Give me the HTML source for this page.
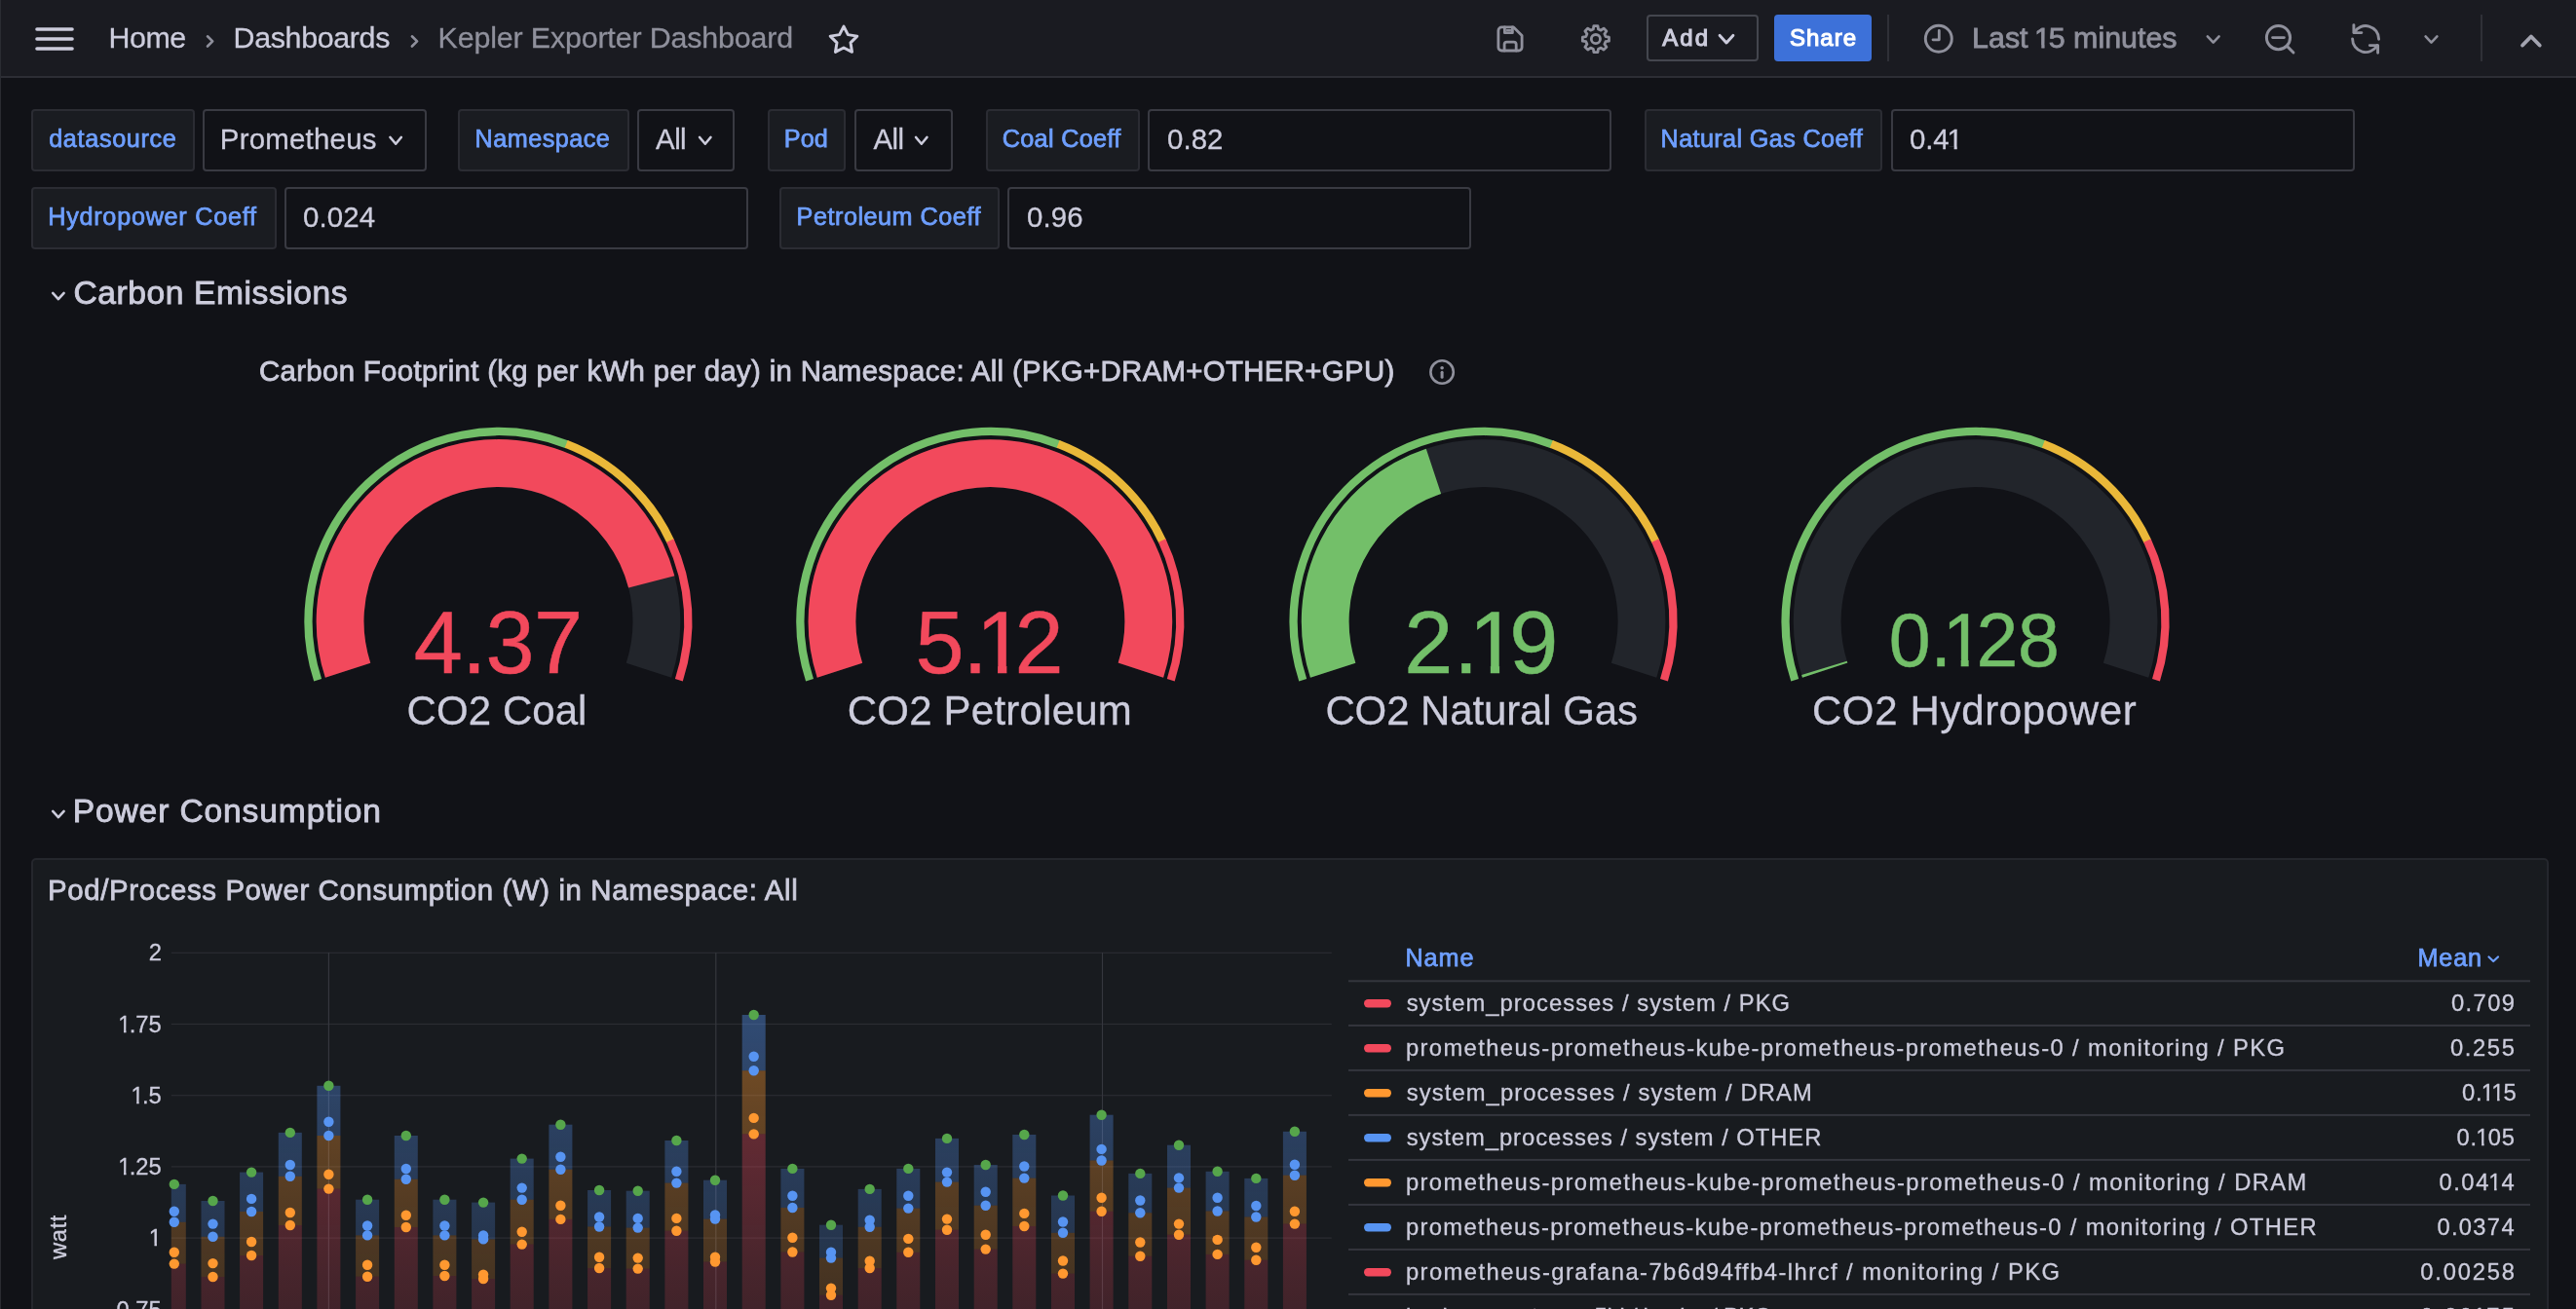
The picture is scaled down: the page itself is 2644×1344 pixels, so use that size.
<!DOCTYPE html>
<html><head><meta charset="utf-8"><title>Kepler Exporter Dashboard</title>
<style>
html,body{margin:0;padding:0;background:#111217;}
body{width:2644px;height:1344px;overflow:hidden;position:relative;font-family:"Liberation Sans",sans-serif;}
.t{position:absolute;white-space:nowrap;display:block;}
.b{position:absolute;box-sizing:content-box;}
svg{position:absolute;left:0;top:0;}
#root{position:absolute;left:0;top:0;width:2644px;height:1344px;overflow:hidden;will-change:transform;}
</style></head><body><div id="root">
<div class="b" style="left:0;top:0;width:2644px;height:78px;background:#1a1b21;border-bottom:2px solid #2d2e35"></div>
<span class="t" style="left:111.6px;top:21px;font-size:30.38px;line-height:34px;color:#ccccdc;letter-spacing:-0.522px;-webkit-text-stroke:0.3px #ccccdc;">Home</span>
<span class="t" style="left:239.6px;top:21px;font-size:30.38px;line-height:34px;color:#ccccdc;letter-spacing:-0.339px;-webkit-text-stroke:0.3px #ccccdc;">Dashboards</span>
<span class="t" style="left:449.6px;top:21px;font-size:30.38px;line-height:34px;color:#8f909c;letter-spacing:-0.152px;-webkit-text-stroke:0.3px #8f909c;">Kepler Exporter Dashboard</span>
<div class="b" style="left:1690px;top:15px;width:111px;height:44px;background:transparent;border:2px solid #44464e;border-radius:4px;"></div>
<span class="t" style="left:1706.3px;top:25px;font-size:24.0px;line-height:27px;color:#ccccdc;letter-spacing:2.020px;-webkit-text-stroke:1.1px #ccccdc;">Add</span>
<div class="b" style="left:1821px;top:15px;width:100px;height:48px;background:#3d71d9;border-radius:4px"></div>
<span class="t" style="left:1836.9px;top:25px;font-size:24.0px;line-height:27px;color:#ffffff;letter-spacing:1.050px;-webkit-text-stroke:1.1px #ffffff;">Share</span>
<div class="b" style="left:1937px;top:15px;width:2px;height:48px;background:#2f3037"></div>
<span class="t" style="left:2024.1px;top:21px;font-size:30.38px;line-height:34px;color:#8f909c;letter-spacing:0.019px;-webkit-text-stroke:0.8px #8f909c;">Last <span style="display:inline-block;margin:0 -0.07em 0 -0.07em;clip-path:polygon(0 0,0.36em 0,0.348em 25.1px,0.348em 30px,0.245em 30px,0.245em 25.1px,0 25.1px)">1</span>5 minutes</span>
<div class="b" style="left:2546px;top:15px;width:2px;height:48px;background:#2f3037"></div>
<div class="b" style="left:0;top:0;width:1px;height:1344px;background:#2a2c32"></div>
<div class="b" style="left:32px;top:112px;width:164px;height:60px;background:#1a1c21;border:2px solid #2b2c33;border-radius:4px;"></div>
<span class="t" style="left:50.2px;top:128px;font-size:25.2px;line-height:28px;color:#6e9fff;letter-spacing:0.670px;-webkit-text-stroke:0.75px #6e9fff;">datasource</span>
<div class="b" style="left:208px;top:112px;width:226px;height:60px;background:#111217;border:2px solid #393a42;border-radius:4px;"></div>
<span class="t" style="left:225.8px;top:126px;font-size:29.4px;line-height:33px;color:#ccccdc;letter-spacing:0.246px;-webkit-text-stroke:0.3px #ccccdc;">Prometheus</span>
<div class="b" style="left:470px;top:112px;width:172px;height:60px;background:#1a1c21;border:2px solid #2b2c33;border-radius:4px;"></div>
<span class="t" style="left:487.6px;top:128px;font-size:25.2px;line-height:28px;color:#6e9fff;letter-spacing:0.463px;-webkit-text-stroke:0.75px #6e9fff;">Namespace</span>
<div class="b" style="left:654px;top:112px;width:96px;height:60px;background:#111217;border:2px solid #393a42;border-radius:4px;"></div>
<span class="t" style="left:673.1px;top:126px;font-size:29.4px;line-height:33px;color:#ccccdc;letter-spacing:-0.561px;-webkit-text-stroke:0.3px #ccccdc;">All</span>
<div class="b" style="left:788px;top:112px;width:76px;height:60px;background:#1a1c21;border:2px solid #2b2c33;border-radius:4px;"></div>
<span class="t" style="left:804.7px;top:128px;font-size:25.2px;line-height:28px;color:#6e9fff;letter-spacing:0.149px;-webkit-text-stroke:0.75px #6e9fff;">Pod</span>
<div class="b" style="left:877px;top:112px;width:97px;height:60px;background:#111217;border:2px solid #393a42;border-radius:4px;"></div>
<span class="t" style="left:896.5px;top:126px;font-size:29.4px;line-height:33px;color:#ccccdc;letter-spacing:-0.561px;-webkit-text-stroke:0.3px #ccccdc;">All</span>
<div class="b" style="left:1012px;top:112px;width:154px;height:60px;background:#1a1c21;border:2px solid #2b2c33;border-radius:4px;"></div>
<span class="t" style="left:1028.7px;top:128px;font-size:25.2px;line-height:28px;color:#6e9fff;letter-spacing:0.341px;-webkit-text-stroke:0.75px #6e9fff;">Coal Coeff</span>
<div class="b" style="left:1178px;top:112px;width:472px;height:60px;background:#111217;border:2px solid #393a42;border-radius:4px;"></div>
<span class="t" style="left:1198.1px;top:126px;font-size:29.4px;line-height:33px;color:#ccccdc;letter-spacing:0.021px;-webkit-text-stroke:0.3px #ccccdc;">0.82</span>
<div class="b" style="left:1688px;top:112px;width:240px;height:60px;background:#1a1c21;border:2px solid #2b2c33;border-radius:4px;"></div>
<span class="t" style="left:1704.6px;top:128px;font-size:25.2px;line-height:28px;color:#6e9fff;letter-spacing:0.379px;-webkit-text-stroke:0.75px #6e9fff;">Natural Gas Coeff</span>
<div class="b" style="left:1941px;top:112px;width:472px;height:60px;background:#111217;border:2px solid #393a42;border-radius:4px;"></div>
<span class="t" style="left:1959.9px;top:126px;font-size:29.4px;line-height:33px;color:#ccccdc;letter-spacing:-0.075px;-webkit-text-stroke:0.3px #ccccdc;">0.4<span style="display:inline-block;margin:0 0em 0 -0.07em;clip-path:polygon(0 0,0.36em 0,0.348em 24.2px,0.348em 29px,0.245em 29px,0.245em 24.2px,0 24.2px)">1</span></span>
<div class="b" style="left:32px;top:192px;width:248px;height:60px;background:#1a1c21;border:2px solid #2b2c33;border-radius:4px;"></div>
<span class="t" style="left:49.2px;top:208px;font-size:25.2px;line-height:28px;color:#6e9fff;letter-spacing:0.752px;-webkit-text-stroke:0.75px #6e9fff;">Hydropower Coeff</span>
<div class="b" style="left:292px;top:192px;width:472px;height:60px;background:#111217;border:2px solid #393a42;border-radius:4px;"></div>
<span class="t" style="left:311.0px;top:206px;font-size:29.4px;line-height:33px;color:#ccccdc;letter-spacing:0.139px;-webkit-text-stroke:0.3px #ccccdc;">0.024</span>
<div class="b" style="left:800px;top:192px;width:222px;height:60px;background:#1a1c21;border:2px solid #2b2c33;border-radius:4px;"></div>
<span class="t" style="left:817.6px;top:208px;font-size:25.2px;line-height:28px;color:#6e9fff;letter-spacing:0.523px;-webkit-text-stroke:0.75px #6e9fff;">Petroleum Coeff</span>
<div class="b" style="left:1034px;top:192px;width:472px;height:60px;background:#111217;border:2px solid #393a42;border-radius:4px;"></div>
<span class="t" style="left:1053.9px;top:206px;font-size:29.4px;line-height:33px;color:#ccccdc;letter-spacing:0.156px;-webkit-text-stroke:0.3px #ccccdc;">0.96</span>
<span class="t" style="left:75.5px;top:282px;font-size:33.6px;line-height:37px;color:#ccccdc;letter-spacing:0.573px;-webkit-text-stroke:0.9px #ccccdc;">Carbon Emissions</span>
<span class="t" style="left:74.7px;top:814px;font-size:33.6px;line-height:37px;color:#ccccdc;letter-spacing:0.869px;-webkit-text-stroke:0.9px #ccccdc;">Power Consumption</span>
<span class="t" style="left:266.0px;top:364px;font-size:29.4px;line-height:33px;color:#ccccdc;letter-spacing:0.325px;-webkit-text-stroke:0.8px #ccccdc;">Carbon Footprint (kg per kWh per day) in Namespace: All (PKG+DRAM+OTHER+GPU)</span>
<span class="t" style="left:424.7px;top:610px;font-size:90px;line-height:100px;color:#f2495c;letter-spacing:-0.583px;-webkit-text-stroke:0.5px #f2495c;">4.37</span>
<span class="t" style="left:939.6px;top:610px;font-size:90px;line-height:100px;color:#f2495c;letter-spacing:-1.150px;-webkit-text-stroke:0.5px #f2495c;">5.<span style="display:inline-block;margin:0 -0.105em 0 -0.115em;clip-path:polygon(0 0,0.36em 0,0.348em 72.5px,0.348em 83px,0.245em 83px,0.245em 72.5px,0 72.5px)">1</span>2</span>
<span class="t" style="left:1441.2px;top:610px;font-size:90px;line-height:100px;color:#73bf69;letter-spacing:0.933px;-webkit-text-stroke:0.5px #73bf69;">2.<span style="display:inline-block;margin:0 -0.105em 0 -0.115em;clip-path:polygon(0 0,0.36em 0,0.348em 72.5px,0.348em 83px,0.245em 83px,0.245em 72.5px,0 72.5px)">1</span>9</span>
<span class="t" style="left:1938.8px;top:614px;font-size:77px;line-height:86px;color:#73bf69;letter-spacing:-0.175px;-webkit-text-stroke:0.45px #73bf69;">0.<span style="display:inline-block;margin:0 -0.105em 0 -0.115em;clip-path:polygon(0 0,0.36em 0,0.348em 62.7px,0.348em 72px,0.245em 72px,0.245em 62.7px,0 62.7px)">1</span>28</span>
<span class="t" style="left:417.6px;top:706px;font-size:42.0px;line-height:47px;color:#ccccdc;letter-spacing:0.064px;-webkit-text-stroke:0.3px #ccccdc;">CO2 Coal</span>
<span class="t" style="left:869.7px;top:706px;font-size:42.0px;line-height:47px;color:#ccccdc;letter-spacing:0.220px;-webkit-text-stroke:0.3px #ccccdc;">CO2 Petroleum</span>
<span class="t" style="left:1360.4px;top:706px;font-size:42.0px;line-height:47px;color:#ccccdc;letter-spacing:-0.112px;-webkit-text-stroke:0.3px #ccccdc;">CO2 Natural Gas</span>
<span class="t" style="left:1859.9px;top:706px;font-size:42.0px;line-height:47px;color:#ccccdc;letter-spacing:0.653px;-webkit-text-stroke:0.3px #ccccdc;">CO2 Hydropower</span>
<div class="b" style="left:32px;top:881px;width:2580px;height:500px;background:#181b1f;border:2px solid #25272d;border-radius:5px"></div>
<span class="t" style="left:49.1px;top:897px;font-size:29.4px;line-height:33px;color:#ccccdc;letter-spacing:0.625px;-webkit-text-stroke:0.8px #ccccdc;">Pod/Process Power Consumption (W) in Namespace: All</span>
<span class="t" style="left:152.8px;top:964px;font-size:23.76px;line-height:27px;color:#ccccdc;-webkit-text-stroke:0.3px #ccccdc;">2</span>
<span class="t" style="left:121.2px;top:1038px;font-size:23.76px;line-height:27px;color:#ccccdc;-webkit-text-stroke:0.3px #ccccdc;"><span style="display:inline-block;margin:0 -0.07em 0 0em;clip-path:polygon(0 0,0.36em 0,0.348em 19.7px,0.348em 24px,0.245em 24px,0.245em 19.7px,0 19.7px)">1</span>.75</span>
<span class="t" style="left:134.4px;top:1111px;font-size:23.76px;line-height:27px;color:#ccccdc;-webkit-text-stroke:0.3px #ccccdc;"><span style="display:inline-block;margin:0 -0.07em 0 0em;clip-path:polygon(0 0,0.36em 0,0.348em 19.7px,0.348em 24px,0.245em 24px,0.245em 19.7px,0 19.7px)">1</span>.5</span>
<span class="t" style="left:121.2px;top:1184px;font-size:23.76px;line-height:27px;color:#ccccdc;-webkit-text-stroke:0.3px #ccccdc;"><span style="display:inline-block;margin:0 -0.07em 0 0em;clip-path:polygon(0 0,0.36em 0,0.348em 19.7px,0.348em 24px,0.245em 24px,0.245em 19.7px,0 19.7px)">1</span>.25</span>
<span class="t" style="left:152.7px;top:1257px;font-size:23.76px;line-height:27px;color:#ccccdc;-webkit-text-stroke:0.3px #ccccdc;"><span style="display:inline-block;margin:0 0em 0 0em;clip-path:polygon(0 0,0.36em 0,0.348em 19.7px,0.348em 24px,0.245em 24px,0.245em 19.7px,0 19.7px)">1</span></span>
<span class="t" style="left:119.5px;top:1331px;font-size:23.76px;line-height:27px;color:#ccccdc;-webkit-text-stroke:0.3px #ccccdc;">0.75</span>
<span class="t" style="left:0.0px;top:-22px;font-size:23.76px;line-height:27px;color:#ccccdc;letter-spacing:0.613px;-webkit-text-stroke:0.3px #ccccdc;transform:rotate(-90deg);transform-origin:0 0;left:46px;top:1293px;">watt</span>
<span class="t" style="left:1442.4px;top:969px;font-size:25.2px;line-height:28px;color:#6e9fff;letter-spacing:0.997px;-webkit-text-stroke:0.75px #6e9fff;">Name</span>
<span class="t" style="left:2481.4px;top:969px;font-size:25.2px;line-height:28px;color:#6e9fff;letter-spacing:0.885px;-webkit-text-stroke:0.75px #6e9fff;">Mean</span>
<span class="t" style="left:1443.7px;top:1016px;font-size:23.76px;line-height:27px;color:#ccccdc;letter-spacing:1.058px;-webkit-text-stroke:0.3px #ccccdc;">system_processes / system / PKG</span>
<span class="t" style="left:2515.9px;top:1016px;font-size:23.76px;line-height:27px;color:#ccccdc;letter-spacing:1.430px;-webkit-text-stroke:0.3px #ccccdc;">0.709</span>
<span class="t" style="left:1442.9px;top:1062px;font-size:23.76px;line-height:27px;color:#ccccdc;letter-spacing:1.405px;-webkit-text-stroke:0.3px #ccccdc;">prometheus-prometheus-kube-prometheus-prometheus-0 / monitoring / PKG</span>
<span class="t" style="left:2514.9px;top:1062px;font-size:23.76px;line-height:27px;color:#ccccdc;letter-spacing:1.650px;-webkit-text-stroke:0.3px #ccccdc;">0.255</span>
<span class="t" style="left:1443.7px;top:1108px;font-size:23.76px;line-height:27px;color:#ccccdc;letter-spacing:1.118px;-webkit-text-stroke:0.3px #ccccdc;">system_processes / system / DRAM</span>
<span class="t" style="left:2527.0px;top:1108px;font-size:23.76px;line-height:27px;color:#ccccdc;letter-spacing:0.734px;-webkit-text-stroke:0.3px #ccccdc;">0.<span style="display:inline-block;margin:0 -0.07em 0 -0.07em;clip-path:polygon(0 0,0.36em 0,0.348em 19.7px,0.348em 24px,0.245em 24px,0.245em 19.7px,0 19.7px)">1</span><span style="display:inline-block;margin:0 -0.07em 0 -0.07em;clip-path:polygon(0 0,0.36em 0,0.348em 19.7px,0.348em 24px,0.245em 24px,0.245em 19.7px,0 19.7px)">1</span>5</span>
<span class="t" style="left:1443.7px;top:1154px;font-size:23.76px;line-height:27px;color:#ccccdc;letter-spacing:0.969px;-webkit-text-stroke:0.3px #ccccdc;">system_processes / system / OTHER</span>
<span class="t" style="left:2521.5px;top:1154px;font-size:23.76px;line-height:27px;color:#ccccdc;letter-spacing:0.832px;-webkit-text-stroke:0.3px #ccccdc;">0.<span style="display:inline-block;margin:0 -0.07em 0 -0.07em;clip-path:polygon(0 0,0.36em 0,0.348em 19.7px,0.348em 24px,0.245em 24px,0.245em 19.7px,0 19.7px)">1</span>05</span>
<span class="t" style="left:1442.9px;top:1200px;font-size:23.76px;line-height:27px;color:#ccccdc;letter-spacing:1.422px;-webkit-text-stroke:0.3px #ccccdc;">prometheus-prometheus-kube-prometheus-prometheus-0 / monitoring / DRAM</span>
<span class="t" style="left:2503.4px;top:1200px;font-size:23.76px;line-height:27px;color:#ccccdc;letter-spacing:1.577px;-webkit-text-stroke:0.3px #ccccdc;">0.04<span style="display:inline-block;margin:0 -0.07em 0 -0.07em;clip-path:polygon(0 0,0.36em 0,0.348em 19.7px,0.348em 24px,0.245em 24px,0.245em 19.7px,0 19.7px)">1</span>4</span>
<span class="t" style="left:1442.9px;top:1246px;font-size:23.76px;line-height:27px;color:#ccccdc;letter-spacing:1.359px;-webkit-text-stroke:0.3px #ccccdc;">prometheus-prometheus-kube-prometheus-prometheus-0 / monitoring / OTHER</span>
<span class="t" style="left:2501.4px;top:1246px;font-size:23.76px;line-height:27px;color:#ccccdc;letter-spacing:1.312px;-webkit-text-stroke:0.3px #ccccdc;">0.0374</span>
<span class="t" style="left:1442.9px;top:1292px;font-size:23.76px;line-height:27px;color:#ccccdc;letter-spacing:1.461px;-webkit-text-stroke:0.3px #ccccdc;">prometheus-grafana-7b6d94ffb4-lhrcf / monitoring / PKG</span>
<span class="t" style="left:2484.3px;top:1292px;font-size:23.76px;line-height:27px;color:#ccccdc;letter-spacing:1.785px;-webkit-text-stroke:0.3px #ccccdc;">0.00258</span>
<span class="t" style="left:1442.9px;top:1338px;font-size:23.76px;line-height:27px;color:#ccccdc;letter-spacing:-0.240px;-webkit-text-stroke:0.3px #ccccdc;">kepler-exporter-wg5ld / kepler / PKG</span>
<span class="t" style="left:2484.3px;top:1338px;font-size:23.76px;line-height:27px;color:#ccccdc;letter-spacing:2.339px;-webkit-text-stroke:0.3px #ccccdc;">0.00<span style="display:inline-block;margin:0 -0.07em 0 -0.07em;clip-path:polygon(0 0,0.36em 0,0.348em 19.7px,0.348em 24px,0.245em 24px,0.245em 19.7px,0 19.7px)">1</span>75</span>
<svg width="2644" height="1344" viewBox="0 0 2644 1344"><defs><clipPath id="pc"><rect x="175.8" y="960" width="1191" height="400"/></clipPath><linearGradient id="gb" x1="0" y1="978" x2="0" y2="1564" gradientUnits="userSpaceOnUse"><stop offset="0" stop-color="#5794f2" stop-opacity="0.45"/><stop offset="1" stop-color="#5794f2" stop-opacity="0"/></linearGradient><linearGradient id="go" x1="0" y1="978" x2="0" y2="1564" gradientUnits="userSpaceOnUse"><stop offset="0" stop-color="#ff9830" stop-opacity="0.47"/><stop offset="1" stop-color="#ff9830" stop-opacity="0"/></linearGradient><linearGradient id="gr" x1="0" y1="978" x2="0" y2="1564" gradientUnits="userSpaceOnUse"><stop offset="0" stop-color="#f2495c" stop-opacity="0.5"/><stop offset="1" stop-color="#f2495c" stop-opacity="0"/></linearGradient></defs><rect x="175.8" y="977.70" width="1191.0" height="1.2" fill="#2b2d32"/><rect x="175.8" y="1050.90" width="1191.0" height="1.2" fill="#2b2d32"/><rect x="175.8" y="1124.10" width="1191.0" height="1.2" fill="#2b2d32"/><rect x="175.8" y="1197.30" width="1191.0" height="1.2" fill="#2b2d32"/><rect x="175.8" y="1270.50" width="1191.0" height="1.2" fill="#2b2d32"/><rect x="336.80" y="978" width="1.2" height="380" fill="#2b2d32"/><rect x="734.20" y="978" width="1.2" height="380" fill="#2b2d32"/><rect x="1130.90" y="978" width="1.2" height="380" fill="#2b2d32"/><g clip-path="url(#pc)"><rect x="166.8" y="1215.9" width="24" height="38.9" fill="url(#gb)"/><rect x="166.8" y="1254.8" width="24" height="42.8" fill="url(#go)"/><rect x="166.8" y="1297.6" width="24" height="52.4" fill="url(#gr)"/><rect x="206.5" y="1233.0" width="24" height="36.8" fill="url(#gb)"/><rect x="206.5" y="1269.8" width="24" height="41.2" fill="url(#go)"/><rect x="206.5" y="1311.0" width="24" height="39.0" fill="url(#gr)"/><rect x="246.1" y="1203.6" width="24" height="40.4" fill="url(#gb)"/><rect x="246.1" y="1244.0" width="24" height="45.0" fill="url(#go)"/><rect x="246.1" y="1289.0" width="24" height="61.0" fill="url(#gr)"/><rect x="285.8" y="1162.9" width="24" height="44.9" fill="url(#gb)"/><rect x="285.8" y="1207.8" width="24" height="50.2" fill="url(#go)"/><rect x="285.8" y="1258.0" width="24" height="92.0" fill="url(#gr)"/><rect x="325.4" y="1114.8" width="24" height="51.2" fill="url(#gb)"/><rect x="325.4" y="1166.0" width="24" height="54.6" fill="url(#go)"/><rect x="325.4" y="1220.6" width="24" height="129.4" fill="url(#gr)"/><rect x="365.1" y="1231.7" width="24" height="36.7" fill="url(#gb)"/><rect x="365.1" y="1268.4" width="24" height="42.3" fill="url(#go)"/><rect x="365.1" y="1310.7" width="24" height="39.3" fill="url(#gr)"/><rect x="404.8" y="1166.0" width="24" height="44.7" fill="url(#gb)"/><rect x="404.8" y="1210.7" width="24" height="49.3" fill="url(#go)"/><rect x="404.8" y="1260.0" width="24" height="90.0" fill="url(#gr)"/><rect x="444.4" y="1231.7" width="24" height="36.7" fill="url(#gb)"/><rect x="444.4" y="1268.4" width="24" height="41.6" fill="url(#go)"/><rect x="444.4" y="1310.0" width="24" height="40.0" fill="url(#gr)"/><rect x="484.1" y="1234.6" width="24" height="37.8" fill="url(#gb)"/><rect x="484.1" y="1272.4" width="24" height="40.6" fill="url(#go)"/><rect x="484.1" y="1313.0" width="24" height="37.0" fill="url(#gr)"/><rect x="523.7" y="1189.6" width="24" height="42.1" fill="url(#gb)"/><rect x="523.7" y="1231.7" width="24" height="45.9" fill="url(#go)"/><rect x="523.7" y="1277.6" width="24" height="72.4" fill="url(#gr)"/><rect x="563.4" y="1154.7" width="24" height="46.0" fill="url(#gb)"/><rect x="563.4" y="1200.7" width="24" height="51.2" fill="url(#go)"/><rect x="563.4" y="1251.9" width="24" height="98.1" fill="url(#gr)"/><rect x="603.1" y="1222.0" width="24" height="37.5" fill="url(#gb)"/><rect x="603.1" y="1259.5" width="24" height="42.5" fill="url(#go)"/><rect x="603.1" y="1302.0" width="24" height="48.0" fill="url(#gr)"/><rect x="642.7" y="1222.7" width="24" height="37.9" fill="url(#gb)"/><rect x="642.7" y="1260.6" width="24" height="42.0" fill="url(#go)"/><rect x="642.7" y="1302.6" width="24" height="47.4" fill="url(#gr)"/><rect x="682.4" y="1171.0" width="24" height="43.6" fill="url(#gb)"/><rect x="682.4" y="1214.6" width="24" height="49.1" fill="url(#go)"/><rect x="682.4" y="1263.7" width="24" height="86.3" fill="url(#gr)"/><rect x="722.0" y="1211.7" width="24" height="39.9" fill="url(#gb)"/><rect x="722.0" y="1251.6" width="24" height="43.9" fill="url(#go)"/><rect x="722.0" y="1295.5" width="24" height="54.5" fill="url(#gr)"/><rect x="761.7" y="1042.0" width="24" height="57.3" fill="url(#gb)"/><rect x="761.7" y="1099.3" width="24" height="65.1" fill="url(#go)"/><rect x="761.7" y="1164.4" width="24" height="185.6" fill="url(#gr)"/><rect x="801.4" y="1199.9" width="24" height="40.1" fill="url(#gb)"/><rect x="801.4" y="1240.0" width="24" height="45.5" fill="url(#go)"/><rect x="801.4" y="1285.5" width="24" height="64.5" fill="url(#gr)"/><rect x="841.0" y="1257.7" width="24" height="33.9" fill="url(#gb)"/><rect x="841.0" y="1291.6" width="24" height="38.1" fill="url(#go)"/><rect x="841.0" y="1329.7" width="24" height="20.3" fill="url(#gr)"/><rect x="880.7" y="1220.9" width="24" height="38.9" fill="url(#gb)"/><rect x="880.7" y="1259.8" width="24" height="42.2" fill="url(#go)"/><rect x="880.7" y="1302.0" width="24" height="48.0" fill="url(#gr)"/><rect x="920.3" y="1199.9" width="24" height="40.7" fill="url(#gb)"/><rect x="920.3" y="1240.6" width="24" height="45.2" fill="url(#go)"/><rect x="920.3" y="1285.8" width="24" height="64.2" fill="url(#gr)"/><rect x="960.0" y="1168.9" width="24" height="44.7" fill="url(#gb)"/><rect x="960.0" y="1213.6" width="24" height="49.1" fill="url(#go)"/><rect x="960.0" y="1262.7" width="24" height="87.3" fill="url(#gr)"/><rect x="999.7" y="1196.0" width="24" height="41.7" fill="url(#gb)"/><rect x="999.7" y="1237.7" width="24" height="44.9" fill="url(#go)"/><rect x="999.7" y="1282.6" width="24" height="67.4" fill="url(#gr)"/><rect x="1039.3" y="1165.0" width="24" height="44.6" fill="url(#gb)"/><rect x="1039.3" y="1209.6" width="24" height="49.4" fill="url(#go)"/><rect x="1039.3" y="1259.0" width="24" height="91.0" fill="url(#gr)"/><rect x="1079.0" y="1227.5" width="24" height="38.3" fill="url(#gb)"/><rect x="1079.0" y="1265.8" width="24" height="41.8" fill="url(#go)"/><rect x="1079.0" y="1307.6" width="24" height="42.4" fill="url(#gr)"/><rect x="1118.6" y="1144.7" width="24" height="46.8" fill="url(#gb)"/><rect x="1118.6" y="1191.5" width="24" height="52.3" fill="url(#go)"/><rect x="1118.6" y="1243.8" width="24" height="106.2" fill="url(#gr)"/><rect x="1158.3" y="1204.9" width="24" height="40.4" fill="url(#gb)"/><rect x="1158.3" y="1245.3" width="24" height="44.4" fill="url(#go)"/><rect x="1158.3" y="1289.7" width="24" height="60.3" fill="url(#gr)"/><rect x="1198.0" y="1175.7" width="24" height="43.9" fill="url(#gb)"/><rect x="1198.0" y="1219.6" width="24" height="48.1" fill="url(#go)"/><rect x="1198.0" y="1267.7" width="24" height="82.3" fill="url(#gr)"/><rect x="1237.6" y="1202.8" width="24" height="40.7" fill="url(#gb)"/><rect x="1237.6" y="1243.5" width="24" height="44.4" fill="url(#go)"/><rect x="1237.6" y="1287.9" width="24" height="62.1" fill="url(#gr)"/><rect x="1277.3" y="1209.9" width="24" height="39.6" fill="url(#gb)"/><rect x="1277.3" y="1249.5" width="24" height="44.2" fill="url(#go)"/><rect x="1277.3" y="1293.7" width="24" height="56.3" fill="url(#gr)"/><rect x="1316.9" y="1161.8" width="24" height="44.9" fill="url(#gb)"/><rect x="1316.9" y="1206.7" width="24" height="49.9" fill="url(#go)"/><rect x="1316.9" y="1256.6" width="24" height="93.4" fill="url(#gr)"/></g><rect x="336.80" y="978" width="1.2" height="380" fill="#ccccdc" opacity="0.07"/><rect x="734.20" y="978" width="1.2" height="380" fill="#ccccdc" opacity="0.07"/><rect x="1130.90" y="978" width="1.2" height="380" fill="#ccccdc" opacity="0.07"/><circle cx="178.8" cy="1297.6" r="5.2" fill="#ff9830"/><circle cx="178.8" cy="1285.8" r="5.2" fill="#ff9830"/><circle cx="178.8" cy="1254.8" r="5.2" fill="#5794f2"/><circle cx="178.8" cy="1243.8" r="5.2" fill="#5794f2"/><circle cx="178.8" cy="1215.9" r="5.2" fill="#56a64b"/><circle cx="218.5" cy="1311.0" r="5.2" fill="#ff9830"/><circle cx="218.5" cy="1297.1" r="5.2" fill="#ff9830"/><circle cx="218.5" cy="1269.8" r="5.2" fill="#5794f2"/><circle cx="218.5" cy="1256.6" r="5.2" fill="#5794f2"/><circle cx="218.5" cy="1233.0" r="5.2" fill="#56a64b"/><circle cx="258.1" cy="1289.0" r="5.2" fill="#ff9830"/><circle cx="258.1" cy="1275.0" r="5.2" fill="#ff9830"/><circle cx="258.1" cy="1244.0" r="5.2" fill="#5794f2"/><circle cx="258.1" cy="1230.9" r="5.2" fill="#5794f2"/><circle cx="258.1" cy="1203.6" r="5.2" fill="#56a64b"/><circle cx="297.8" cy="1258.0" r="5.2" fill="#ff9830"/><circle cx="297.8" cy="1245.0" r="5.2" fill="#ff9830"/><circle cx="297.8" cy="1207.8" r="5.2" fill="#5794f2"/><circle cx="297.8" cy="1196.0" r="5.2" fill="#5794f2"/><circle cx="297.8" cy="1162.9" r="5.2" fill="#56a64b"/><circle cx="337.4" cy="1220.6" r="5.2" fill="#ff9830"/><circle cx="337.4" cy="1205.7" r="5.2" fill="#ff9830"/><circle cx="337.4" cy="1166.0" r="5.2" fill="#5794f2"/><circle cx="337.4" cy="1151.8" r="5.2" fill="#5794f2"/><circle cx="337.4" cy="1114.8" r="5.2" fill="#56a64b"/><circle cx="377.1" cy="1310.7" r="5.2" fill="#ff9830"/><circle cx="377.1" cy="1298.7" r="5.2" fill="#ff9830"/><circle cx="377.1" cy="1268.4" r="5.2" fill="#5794f2"/><circle cx="377.1" cy="1258.5" r="5.2" fill="#5794f2"/><circle cx="377.1" cy="1231.7" r="5.2" fill="#56a64b"/><circle cx="416.8" cy="1260.0" r="5.2" fill="#ff9830"/><circle cx="416.8" cy="1247.7" r="5.2" fill="#ff9830"/><circle cx="416.8" cy="1210.7" r="5.2" fill="#5794f2"/><circle cx="416.8" cy="1200.0" r="5.2" fill="#5794f2"/><circle cx="416.8" cy="1166.0" r="5.2" fill="#56a64b"/><circle cx="456.4" cy="1310.0" r="5.2" fill="#ff9830"/><circle cx="456.4" cy="1298.7" r="5.2" fill="#ff9830"/><circle cx="456.4" cy="1268.4" r="5.2" fill="#5794f2"/><circle cx="456.4" cy="1258.5" r="5.2" fill="#5794f2"/><circle cx="456.4" cy="1231.7" r="5.2" fill="#56a64b"/><circle cx="496.1" cy="1313.0" r="5.2" fill="#ff9830"/><circle cx="496.1" cy="1308.6" r="5.2" fill="#ff9830"/><circle cx="496.1" cy="1272.4" r="5.2" fill="#5794f2"/><circle cx="496.1" cy="1268.4" r="5.2" fill="#5794f2"/><circle cx="496.1" cy="1234.6" r="5.2" fill="#56a64b"/><circle cx="535.7" cy="1277.6" r="5.2" fill="#ff9830"/><circle cx="535.7" cy="1264.8" r="5.2" fill="#ff9830"/><circle cx="535.7" cy="1231.7" r="5.2" fill="#5794f2"/><circle cx="535.7" cy="1219.6" r="5.2" fill="#5794f2"/><circle cx="535.7" cy="1189.6" r="5.2" fill="#56a64b"/><circle cx="575.4" cy="1251.9" r="5.2" fill="#ff9830"/><circle cx="575.4" cy="1237.7" r="5.2" fill="#ff9830"/><circle cx="575.4" cy="1200.7" r="5.2" fill="#5794f2"/><circle cx="575.4" cy="1187.8" r="5.2" fill="#5794f2"/><circle cx="575.4" cy="1154.7" r="5.2" fill="#56a64b"/><circle cx="615.1" cy="1302.0" r="5.2" fill="#ff9830"/><circle cx="615.1" cy="1290.8" r="5.2" fill="#ff9830"/><circle cx="615.1" cy="1259.5" r="5.2" fill="#5794f2"/><circle cx="615.1" cy="1249.5" r="5.2" fill="#5794f2"/><circle cx="615.1" cy="1222.0" r="5.2" fill="#56a64b"/><circle cx="654.7" cy="1302.6" r="5.2" fill="#ff9830"/><circle cx="654.7" cy="1291.6" r="5.2" fill="#ff9830"/><circle cx="654.7" cy="1260.6" r="5.2" fill="#5794f2"/><circle cx="654.7" cy="1250.9" r="5.2" fill="#5794f2"/><circle cx="654.7" cy="1222.7" r="5.2" fill="#56a64b"/><circle cx="694.4" cy="1263.7" r="5.2" fill="#ff9830"/><circle cx="694.4" cy="1250.9" r="5.2" fill="#ff9830"/><circle cx="694.4" cy="1214.6" r="5.2" fill="#5794f2"/><circle cx="694.4" cy="1202.8" r="5.2" fill="#5794f2"/><circle cx="694.4" cy="1171.0" r="5.2" fill="#56a64b"/><circle cx="734.0" cy="1295.5" r="5.2" fill="#ff9830"/><circle cx="734.0" cy="1290.8" r="5.2" fill="#ff9830"/><circle cx="734.0" cy="1251.6" r="5.2" fill="#5794f2"/><circle cx="734.0" cy="1247.4" r="5.2" fill="#5794f2"/><circle cx="734.0" cy="1211.7" r="5.2" fill="#56a64b"/><circle cx="773.7" cy="1164.4" r="5.2" fill="#ff9830"/><circle cx="773.7" cy="1147.9" r="5.2" fill="#ff9830"/><circle cx="773.7" cy="1099.3" r="5.2" fill="#5794f2"/><circle cx="773.7" cy="1084.8" r="5.2" fill="#5794f2"/><circle cx="773.7" cy="1042.0" r="5.2" fill="#56a64b"/><circle cx="813.4" cy="1285.5" r="5.2" fill="#ff9830"/><circle cx="813.4" cy="1270.8" r="5.2" fill="#ff9830"/><circle cx="813.4" cy="1240.0" r="5.2" fill="#5794f2"/><circle cx="813.4" cy="1227.7" r="5.2" fill="#5794f2"/><circle cx="813.4" cy="1199.9" r="5.2" fill="#56a64b"/><circle cx="853.0" cy="1329.7" r="5.2" fill="#ff9830"/><circle cx="853.0" cy="1322.6" r="5.2" fill="#ff9830"/><circle cx="853.0" cy="1291.6" r="5.2" fill="#5794f2"/><circle cx="853.0" cy="1285.8" r="5.2" fill="#5794f2"/><circle cx="853.0" cy="1257.7" r="5.2" fill="#56a64b"/><circle cx="892.7" cy="1302.0" r="5.2" fill="#ff9830"/><circle cx="892.7" cy="1294.7" r="5.2" fill="#ff9830"/><circle cx="892.7" cy="1259.8" r="5.2" fill="#5794f2"/><circle cx="892.7" cy="1252.7" r="5.2" fill="#5794f2"/><circle cx="892.7" cy="1220.9" r="5.2" fill="#56a64b"/><circle cx="932.3" cy="1285.8" r="5.2" fill="#ff9830"/><circle cx="932.3" cy="1271.9" r="5.2" fill="#ff9830"/><circle cx="932.3" cy="1240.6" r="5.2" fill="#5794f2"/><circle cx="932.3" cy="1227.7" r="5.2" fill="#5794f2"/><circle cx="932.3" cy="1199.9" r="5.2" fill="#56a64b"/><circle cx="972.0" cy="1262.7" r="5.2" fill="#ff9830"/><circle cx="972.0" cy="1251.6" r="5.2" fill="#ff9830"/><circle cx="972.0" cy="1213.6" r="5.2" fill="#5794f2"/><circle cx="972.0" cy="1203.6" r="5.2" fill="#5794f2"/><circle cx="972.0" cy="1168.9" r="5.2" fill="#56a64b"/><circle cx="1011.7" cy="1282.6" r="5.2" fill="#ff9830"/><circle cx="1011.7" cy="1267.7" r="5.2" fill="#ff9830"/><circle cx="1011.7" cy="1237.7" r="5.2" fill="#5794f2"/><circle cx="1011.7" cy="1223.8" r="5.2" fill="#5794f2"/><circle cx="1011.7" cy="1196.0" r="5.2" fill="#56a64b"/><circle cx="1051.3" cy="1259.0" r="5.2" fill="#ff9830"/><circle cx="1051.3" cy="1245.9" r="5.2" fill="#ff9830"/><circle cx="1051.3" cy="1209.6" r="5.2" fill="#5794f2"/><circle cx="1051.3" cy="1197.5" r="5.2" fill="#5794f2"/><circle cx="1051.3" cy="1165.0" r="5.2" fill="#56a64b"/><circle cx="1091.0" cy="1307.6" r="5.2" fill="#ff9830"/><circle cx="1091.0" cy="1294.5" r="5.2" fill="#ff9830"/><circle cx="1091.0" cy="1265.8" r="5.2" fill="#5794f2"/><circle cx="1091.0" cy="1254.5" r="5.2" fill="#5794f2"/><circle cx="1091.0" cy="1227.5" r="5.2" fill="#56a64b"/><circle cx="1130.6" cy="1243.8" r="5.2" fill="#ff9830"/><circle cx="1130.6" cy="1229.8" r="5.2" fill="#ff9830"/><circle cx="1130.6" cy="1191.5" r="5.2" fill="#5794f2"/><circle cx="1130.6" cy="1179.9" r="5.2" fill="#5794f2"/><circle cx="1130.6" cy="1144.7" r="5.2" fill="#56a64b"/><circle cx="1170.3" cy="1289.7" r="5.2" fill="#ff9830"/><circle cx="1170.3" cy="1275.5" r="5.2" fill="#ff9830"/><circle cx="1170.3" cy="1245.3" r="5.2" fill="#5794f2"/><circle cx="1170.3" cy="1232.5" r="5.2" fill="#5794f2"/><circle cx="1170.3" cy="1204.9" r="5.2" fill="#56a64b"/><circle cx="1210.0" cy="1267.7" r="5.2" fill="#ff9830"/><circle cx="1210.0" cy="1256.6" r="5.2" fill="#ff9830"/><circle cx="1210.0" cy="1219.6" r="5.2" fill="#5794f2"/><circle cx="1210.0" cy="1209.4" r="5.2" fill="#5794f2"/><circle cx="1210.0" cy="1175.7" r="5.2" fill="#56a64b"/><circle cx="1249.6" cy="1287.9" r="5.2" fill="#ff9830"/><circle cx="1249.6" cy="1272.9" r="5.2" fill="#ff9830"/><circle cx="1249.6" cy="1243.5" r="5.2" fill="#5794f2"/><circle cx="1249.6" cy="1229.8" r="5.2" fill="#5794f2"/><circle cx="1249.6" cy="1202.8" r="5.2" fill="#56a64b"/><circle cx="1289.3" cy="1293.7" r="5.2" fill="#ff9830"/><circle cx="1289.3" cy="1280.8" r="5.2" fill="#ff9830"/><circle cx="1289.3" cy="1249.5" r="5.2" fill="#5794f2"/><circle cx="1289.3" cy="1238.0" r="5.2" fill="#5794f2"/><circle cx="1289.3" cy="1209.9" r="5.2" fill="#56a64b"/><circle cx="1328.9" cy="1256.6" r="5.2" fill="#ff9830"/><circle cx="1328.9" cy="1243.8" r="5.2" fill="#ff9830"/><circle cx="1328.9" cy="1206.7" r="5.2" fill="#5794f2"/><circle cx="1328.9" cy="1195.7" r="5.2" fill="#5794f2"/><circle cx="1328.9" cy="1161.8" r="5.2" fill="#56a64b"/><path d="M2554.5 982.5 L2559.2 987 L2564 982.5" fill="none" stroke="#6e9fff" stroke-width="2.2" stroke-linecap="round" stroke-linejoin="round"/><rect x="1384" y="1006.3" width="1213" height="2" fill="#34363d"/><rect x="1400" y="1026.1" width="28" height="8.4" rx="4.2" fill="#f2495c"/><rect x="1384" y="1051.9" width="1213" height="2" fill="#34363d"/><rect x="1400" y="1072.1" width="28" height="8.4" rx="4.2" fill="#f2495c"/><rect x="1384" y="1097.9" width="1213" height="2" fill="#34363d"/><rect x="1400" y="1118.1" width="28" height="8.4" rx="4.2" fill="#ff9830"/><rect x="1384" y="1143.9" width="1213" height="2" fill="#34363d"/><rect x="1400" y="1164.1" width="28" height="8.4" rx="4.2" fill="#5794f2"/><rect x="1384" y="1189.9" width="1213" height="2" fill="#34363d"/><rect x="1400" y="1210.1" width="28" height="8.4" rx="4.2" fill="#ff9830"/><rect x="1384" y="1235.9" width="1213" height="2" fill="#34363d"/><rect x="1400" y="1256.1" width="28" height="8.4" rx="4.2" fill="#5794f2"/><rect x="1384" y="1281.9" width="1213" height="2" fill="#34363d"/><rect x="1400" y="1302.1" width="28" height="8.4" rx="4.2" fill="#f2495c"/><rect x="1384" y="1327.9" width="1213" height="2" fill="#34363d"/><rect x="1400" y="1348.1" width="28" height="8.4" rx="4.2" fill="#f2495c"/><rect x="1384" y="1373.9" width="1213" height="2" fill="#34363d"/><line x1="38" y1="30" x2="74" y2="30" stroke="#ccccdc" stroke-width="3.6" stroke-linecap="round"/><line x1="38" y1="40" x2="74" y2="40" stroke="#ccccdc" stroke-width="3.6" stroke-linecap="round"/><line x1="38" y1="50" x2="74" y2="50" stroke="#ccccdc" stroke-width="3.6" stroke-linecap="round"/><path d="M213.0 37.3 L218.2 42.4 L213.0 47.5" fill="none" stroke="#8f909c" stroke-width="2.6" stroke-linecap="round" stroke-linejoin="round"/><path d="M422.9 37.3 L428.1 42.4 L422.9 47.5" fill="none" stroke="#8f909c" stroke-width="2.6" stroke-linecap="round" stroke-linejoin="round"/><polygon points="866.00,27.10 870.35,35.61 879.79,37.12 873.04,43.89 874.52,53.33 866.00,49.00 857.48,53.33 858.96,43.89 852.21,37.12 861.65,35.61" fill="none" stroke="#ccccdc" stroke-width="3" stroke-linejoin="round"/><g fill="none" stroke="#8f909c" stroke-width="2.8" stroke-linejoin="round" stroke-linecap="round"><path d="M1541.4 27.9 H1553.6 L1562.1 36.4 V48.5 a3.5 3.5 0 0 1 -3.5 3.5 H1541.4 a3.5 3.5 0 0 1 -3.5 -3.5 V31.4 a3.5 3.5 0 0 1 3.5 -3.5 Z"/><path d="M1544.4 28 V33.7 H1552.4 V28"/><path d="M1546.6 30.9 H1550.4" stroke-width="2"/><path d="M1544.1 52 V45.6 a2.5 2.5 0 0 1 2.5 -2.5 H1553.7 a2.5 2.5 0 0 1 2.5 2.5 V52"/></g><path d="M1635.86 26.55 L1639.94 26.55 L1640.49 30.03 L1643.19 31.15 L1646.04 29.08 L1648.92 31.96 L1646.85 34.81 L1647.97 37.51 L1651.45 38.06 L1651.45 42.14 L1647.97 42.69 L1646.85 45.39 L1648.92 48.24 L1646.04 51.12 L1643.19 49.05 L1640.49 50.17 L1639.94 53.65 L1635.86 53.65 L1635.31 50.17 L1632.61 49.05 L1629.76 51.12 L1626.88 48.24 L1628.95 45.39 L1627.83 42.69 L1624.35 42.14 L1624.35 38.06 L1627.83 37.51 L1628.95 34.81 L1626.88 31.96 L1629.76 29.08 L1632.61 31.15 L1635.31 30.03 Z" fill="none" stroke="#8f909c" stroke-width="2.8" stroke-linejoin="round"/><circle cx="1637.9" cy="40.1" r="4.6" fill="none" stroke="#8f909c" stroke-width="2.8"/><path d="M1765.2 36.4 L1772.0 44.0 L1778.8 36.4" fill="none" stroke="#ccccdc" stroke-width="3" stroke-linecap="round" stroke-linejoin="round"/><circle cx="1989.8" cy="39.8" r="13.5" fill="none" stroke="#8f909c" stroke-width="2.9"/><path d="M1990.3 31.3 V40.8 H1984" fill="none" stroke="#8f909c" stroke-width="2.8" stroke-linecap="round" stroke-linejoin="round"/><path d="M2265.8 37.4 L2271.7 43.6 L2277.6 37.4" fill="none" stroke="#8f909c" stroke-width="2.6" stroke-linecap="round" stroke-linejoin="round"/><circle cx="2338.5" cy="38.6" r="12.1" fill="none" stroke="#8f909c" stroke-width="3"/><path d="M2332.6 38.6 H2344.4 M2347.4 47.4 L2354 54" fill="none" stroke="#8f909c" stroke-width="2.9" stroke-linecap="round"/><g fill="none" stroke="#8f909c" stroke-width="2.9" stroke-linecap="round" stroke-linejoin="round"><path d="M2416.29 33.56 A13.5 13.5 0 0 1 2441.60 40.34"/><path d="M2415.9 25.6 V33.6 H2423.9"/><path d="M2414.60 39.86 A13.5 13.5 0 0 0 2439.91 46.64"/><path d="M2432.3 46.6 H2440.6 V54.3"/></g><path d="M2489.6 37.4 L2495.5 43.6 L2501.4 37.4" fill="none" stroke="#8f909c" stroke-width="2.6" stroke-linecap="round" stroke-linejoin="round"/><path d="M2589.1 46.5 L2597.9 37.5 L2606.7 46.5" fill="none" stroke="#a3a4b0" stroke-width="3.9" stroke-linecap="round" stroke-linejoin="round"/><path d="M400.4 140.9 L406.2 147.7 L411.9 140.9" fill="none" stroke="#ccccdc" stroke-width="2.5" stroke-linecap="round" stroke-linejoin="round"/><path d="M718.0 140.9 L723.8 147.7 L729.5 140.9" fill="none" stroke="#ccccdc" stroke-width="2.5" stroke-linecap="round" stroke-linejoin="round"/><path d="M940.0 140.9 L945.8 147.7 L951.5 140.9" fill="none" stroke="#ccccdc" stroke-width="2.5" stroke-linecap="round" stroke-linejoin="round"/><path d="M54.2 300.9 L59.9 307.1 L65.6 300.9" fill="none" stroke="#ccccdc" stroke-width="2.6" stroke-linecap="round" stroke-linejoin="round"/><path d="M54.2 832.9 L59.9 839.1 L65.6 832.9" fill="none" stroke="#ccccdc" stroke-width="2.6" stroke-linecap="round" stroke-linejoin="round"/><circle cx="1480.1" cy="382" r="11.7" fill="none" stroke="#8f909c" stroke-width="2.6"/><path d="M1480.1 382.3 V387.2" stroke="#8f909c" stroke-width="3" stroke-linecap="round"/><circle cx="1480.1" cy="377.7" r="1.8" fill="#8f909c"/><path d="M326.14 698.23 A194.9 194.9 0 0 1 582.15 456.35" fill="none" stroke="#73bf69" stroke-width="8.3"/><path d="M581.19 455.99 A194.9 194.9 0 0 1 688.28 555.94" fill="none" stroke="#eab839" stroke-width="8.3"/><path d="M687.85 555.02 A194.9 194.9 0 0 1 696.86 698.23" fill="none" stroke="#f2495c" stroke-width="8.3"/><path d="M357.05 688.18 A162.4 162.4 0 1 1 665.95 688.18" fill="none" stroke="#22252b" stroke-width="48.8"/><path d="M357.05 688.18 A162.4 162.4 0 1 1 668.72 597.32" fill="none" stroke="#f2495c" stroke-width="48.8"/><path d="M831.04 698.23 A194.9 194.9 0 0 1 1087.05 456.35" fill="none" stroke="#73bf69" stroke-width="8.3"/><path d="M1086.09 455.99 A194.9 194.9 0 0 1 1193.18 555.94" fill="none" stroke="#eab839" stroke-width="8.3"/><path d="M1192.75 555.02 A194.9 194.9 0 0 1 1201.76 698.23" fill="none" stroke="#f2495c" stroke-width="8.3"/><path d="M861.95 688.18 A162.4 162.4 0 1 1 1170.85 688.18" fill="none" stroke="#22252b" stroke-width="48.8"/><path d="M861.95 688.18 A162.4 162.4 0 1 1 1170.87 688.13" fill="none" stroke="#f2495c" stroke-width="48.8"/><path d="M1337.24 698.23 A194.9 194.9 0 0 1 1593.25 456.35" fill="none" stroke="#73bf69" stroke-width="8.3"/><path d="M1592.29 455.99 A194.9 194.9 0 0 1 1699.38 555.94" fill="none" stroke="#eab839" stroke-width="8.3"/><path d="M1698.95 555.02 A194.9 194.9 0 0 1 1707.96 698.23" fill="none" stroke="#f2495c" stroke-width="8.3"/><path d="M1368.15 688.18 A162.4 162.4 0 1 1 1677.05 688.18" fill="none" stroke="#22252b" stroke-width="48.8"/><path d="M1368.15 688.18 A162.4 162.4 0 0 1 1471.45 483.87" fill="none" stroke="#73bf69" stroke-width="48.8"/><path d="M1842.24 698.23 A194.9 194.9 0 0 1 2098.25 456.35" fill="none" stroke="#73bf69" stroke-width="8.3"/><path d="M2097.29 455.99 A194.9 194.9 0 0 1 2204.38 555.94" fill="none" stroke="#eab839" stroke-width="8.3"/><path d="M2203.95 555.02 A194.9 194.9 0 0 1 2212.96 698.23" fill="none" stroke="#f2495c" stroke-width="8.3"/><path d="M1873.15 688.18 A162.4 162.4 0 1 1 2182.05 688.18" fill="none" stroke="#22252b" stroke-width="48.8"/><path d="M1873.15 688.18 A162.4 162.4 0 0 1 1872.41 685.85" fill="none" stroke="#73bf69" stroke-width="48.8"/></svg>
</div></body></html>
